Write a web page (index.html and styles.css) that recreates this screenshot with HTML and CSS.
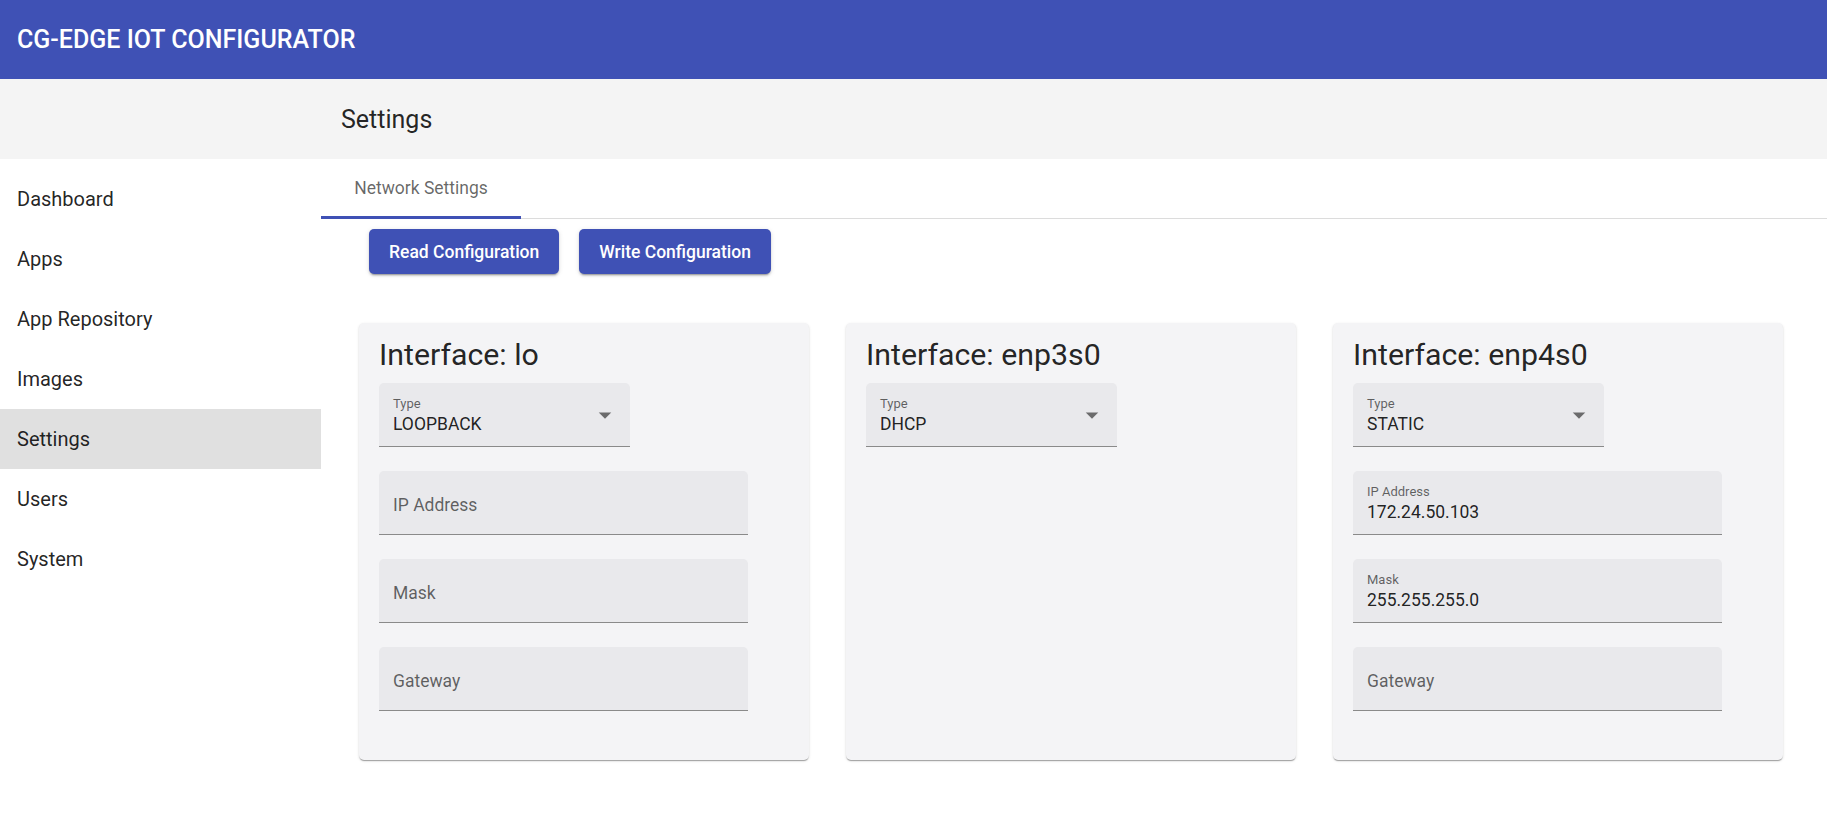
FILE: index.html
```html
<!DOCTYPE html>
<html>
<head>
<meta charset="utf-8">
<title>CG-EDGE IOT CONFIGURATOR</title>
<link rel="stylesheet" href="styles.css">
</head>
<body>
<header class="appbar">
  <h1 class="app-title">CG-EDGE IOT CONFIGURATOR</h1>
</header>
<div class="page-band">
  <h2 class="page-title">Settings</h2>
</div>
<div class="layout">
  <nav class="sidebar">
    <div class="nav-item">Dashboard</div>
    <div class="nav-item">Apps</div>
    <div class="nav-item">App Repository</div>
    <div class="nav-item">Images</div>
    <div class="nav-item active">Settings</div>
    <div class="nav-item">Users</div>
    <div class="nav-item">System</div>
  </nav>
  <main class="main">
    <div class="tabs">
      <div class="tab">Network Settings</div>
    </div>
    <div class="actions">
      <button class="btn">Read Configuration</button>
      <button class="btn">Write Configuration</button>
    </div>
    <div class="cards">
      <section class="card">
        <h3 class="card-title">Interface: lo</h3>
        <div class="field select filled">
          <span class="label">Type</span>
          <span class="value">LOOPBACK</span>
          <svg class="arrow" viewBox="0 0 24 24"><path d="M7 10l5 5 5-5z"/></svg>
        </div>
        <div class="field wide"><span class="placeholder">IP Address</span></div>
        <div class="field wide"><span class="placeholder">Mask</span></div>
        <div class="field wide"><span class="placeholder">Gateway</span></div>
      </section>
      <section class="card">
        <h3 class="card-title">Interface: enp3s0</h3>
        <div class="field select filled">
          <span class="label">Type</span>
          <span class="value">DHCP</span>
          <svg class="arrow" viewBox="0 0 24 24"><path d="M7 10l5 5 5-5z"/></svg>
        </div>
      </section>
      <section class="card">
        <h3 class="card-title">Interface: enp4s0</h3>
        <div class="field select filled">
          <span class="label">Type</span>
          <span class="value">STATIC</span>
          <svg class="arrow" viewBox="0 0 24 24"><path d="M7 10l5 5 5-5z"/></svg>
        </div>
        <div class="field wide filled">
          <span class="label">IP Address</span>
          <span class="value">172.24.50.103</span>
        </div>
        <div class="field wide filled">
          <span class="label">Mask</span>
          <span class="value">255.255.255.0</span>
        </div>
        <div class="field wide"><span class="placeholder">Gateway</span></div>
      </section>
    </div>
  </main>
</div>
</body>
</html>
```
FILE: styles.css
```css
* { box-sizing: border-box; }
html, body { margin: 0; padding: 0; }
body {
  font-family: Roboto, "Liberation Sans", Arial, sans-serif;
  color: rgba(0,0,0,0.87);
  background: #ffffff;
  width: 1827px;
  height: 813px;
  overflow: hidden;
}
.appbar {
  height: 79px;
  background: #3f51b5;
  display: flex;
  align-items: center;
  padding-left: 17px;
}
.app-title {
  margin: 0;
  color: #ffffff;
  font-size: 25px;
  font-weight: 500;
  letter-spacing: 0;
}
.page-band {
  height: 80px;
  background: #f4f4f4;
  display: flex;
  align-items: center;
  padding-left: 341px;
}
.page-title {
  margin: 0;
  font-size: 25px;
  font-weight: 400;
  color: rgba(0,0,0,0.87);
}
.layout {
  display: flex;
}
.sidebar {
  width: 321px;
  flex: none;
  padding-top: 10px;
}
.nav-item {
  height: 60px;
  display: flex;
  align-items: center;
  padding-left: 17px;
  font-size: 20px;
}
.nav-item.active {
  background: #e0e0e0;
}
.main {
  flex: 1;
  min-width: 0;
}
.tabs {
  display: flex;
  border-bottom: 1px solid #dcdcdc;
}
.tab {
  width: 200px;
  height: 60px;
  margin-bottom: -1px;
  border-bottom: 3px solid #3f51b5;
  display: flex;
  align-items: center;
  justify-content: center;
  font-size: 17.5px;
  font-weight: 400;
  color: rgba(0,0,0,0.6);
}
.actions {
  display: flex;
  gap: 20px;
  padding-left: 48px;
  margin-top: 10px;
}
.btn {
  height: 45px;
  padding: 0 20px;
  border: none;
  border-radius: 5px;
  background: #3f51b5;
  color: #ffffff;
  font-family: inherit;
  font-size: 17.5px;
  font-weight: 500;
  box-shadow: 0 3px 1px -2px rgba(0,0,0,0.2), 0 2px 2px 0 rgba(0,0,0,0.14), 0 1px 5px 0 rgba(0,0,0,0.12);
}
.cards {
  display: grid;
  grid-template-columns: repeat(3, 450px);
  gap: 37px;
  padding-left: 38px;
  margin-top: 49px;
}
.card {
  background: #f4f4f6;
  border-radius: 5px;
  height: 437px;
  padding: 15px 20px 48px 20px;
  box-shadow: 0 2px 1px -1px rgba(0,0,0,0.2), 0 1px 1px 0 rgba(0,0,0,0.14), 0 1px 3px 0 rgba(0,0,0,0.12);
}
.card-title {
  margin: 0 0 11px 0;
  font-size: 30.3px;
  font-weight: 400;
  line-height: 34px;
  color: rgba(0,0,0,0.87);
}
.field {
  position: relative;
  height: 64px;
  background: #e9e9ec;
  border-radius: 5px 5px 0 0;
  border-bottom: 1px solid #8a8a8a;
  padding: 0 14px;
  display: flex;
  flex-direction: column;
  justify-content: center;
  margin-bottom: 24px;
}
.field.select { width: 251px; }
.field.wide { width: 369px; }
.field.filled {
  justify-content: flex-start;
  padding-top: 13px;
}
.label {
  font-size: 13px;
  line-height: 16px;
  color: rgba(0,0,0,0.6);
}
.value {
  font-size: 17.5px;
  line-height: 24px;
  color: rgba(0,0,0,0.87);
}
.placeholder {
  font-size: 17.5px;
  color: rgba(0,0,0,0.6);
  padding-top: 4px;
}
.arrow {
  position: absolute;
  right: 10px;
  top: 17px;
  width: 30px;
  height: 30px;
  fill: rgba(0,0,0,0.54);
}
```
